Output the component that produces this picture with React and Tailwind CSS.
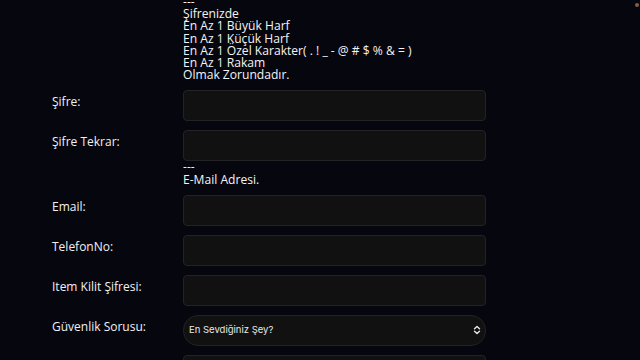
import React from 'react';

const inputCls =
    'w-[303px] h-[31px] rounded-[4px] bg-[#111112] border border-[#232325] outline-none px-2 text-[12px] text-white';

const Row = ({ label, children }) => (
    <div className="flex items-start">
        <label className="w-[131px] pt-[3px] text-[12px] leading-[18px] text-[#f1f1f1]">{label}</label>
        {children}
    </div>
);

const Note = ({ lines }) => (
    <div className="flex">
        <div className="w-[131px]" />
        <div className="text-[12.1px] leading-[12.2px] text-[#f4f4f4]">
            {lines.map((l, i) => (
                <div key={i}>{l}</div>
            ))}
        </div>
    </div>
);

const App = () => {
    return (
        <div
            className="relative w-[640px] h-[360px] overflow-hidden bg-[#06060f] pl-[52px]"
            style={{ fontFamily: '"Open Sans", "Noto Sans", sans-serif' }}
        >
            {/* scroll indicator dot */}
            <div className="absolute right-[1px] top-[3px] w-[4px] h-[4px] rounded-full bg-[#8a5b44]" />

            <div className="flex flex-col gap-[9px] mt-[-4px]">
                <Note
                    lines={[
                        '---',
                        'Şifrenizde',
                        'En Az 1 Büyük Harf',
                        'En Az 1 Küçük Harf',
                        'En Az 1 Özel Karakter( . ! _ - @ # $ % & = )',
                        'En Az 1 Rakam',
                        'Olmak Zorundadır.',
                    ]}
                />
                <Row label="Şifre:">
                    <input type="password" className={inputCls} />
                </Row>
                <Row label="Şifre Tekrar:">
                    <input type="password" className={inputCls} />
                </Row>
                <div className="-mt-[9px]">
                    <Note lines={['---', 'E-Mail Adresi.']} />
                </div>
                <Row label="Email:">
                    <input type="text" className={inputCls} />
                </Row>
                <Row label="TelefonNo:">
                    <input type="text" className={inputCls} />
                </Row>
                <Row label="Item Kilit Şifresi:">
                    <input type="password" className={inputCls} />
                </Row>
                <Row label="Güvenlik Sorusu:">
                    <div className="relative w-[303px] h-[31px] rounded-[15px] bg-[#111112] border border-[#232325] flex items-center px-[5px]">
                        <span className="text-[9.5px] text-[#e8e8e8]" style={{ fontFamily: 'Inter, sans-serif' }}>
                            En Sevdiğiniz Şey?
                        </span>
                        <svg className="absolute right-[4px]" width="8" height="10" viewBox="0 0 8 10" fill="none" stroke="#e8e8e8" strokeWidth="1.4" strokeLinecap="round" strokeLinejoin="round">
                            <path d="M1.5 3.8 4 1.5l2.5 2.3" />
                            <path d="M1.5 6.2 4 8.5l2.5-2.3" />
                        </svg>
                    </div>
                </Row>
                <Row label="">
                    <input type="text" className={inputCls} />
                </Row>
            </div>
        </div>
    );
};

export default App;
